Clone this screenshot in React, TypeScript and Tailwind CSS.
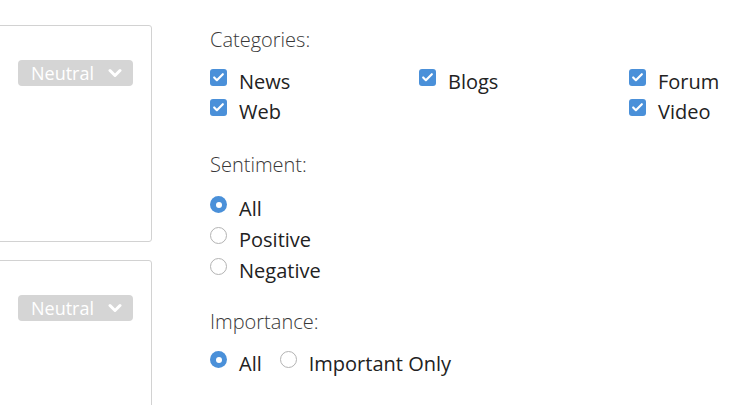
import { Check } from 'lucide-react'

function Badge() {
	return (
		<div className="ml-[27px] flex h-[26px] w-[115px] items-center rounded-[4px] bg-[#d5d5d5] pl-[13px] text-[18px] text-white">
			<span className="leading-[26px]">Neutral</span>
			<svg width="14" height="10" viewBox="0 0 14 10" className="ml-[14px]">
				<path d="M2 2.5l5 5 5-5" fill="none" stroke="white" strokeWidth="3" strokeLinecap="round" strokeLinejoin="round" />
			</svg>
		</div>
	)
}

function Card({ className }: { className: string }) {
	return (
		<div className={`-ml-[10px] w-[162px] shrink-0 rounded-[3px] border border-[#d2d2d2] pt-[34px] ${className}`}>
			<Badge />
		</div>
	)
}

function CheckItem({ label }: { label: string }) {
	return (
		<div className="flex h-[30px] items-start">
			<span className="mt-[3px] flex size-[17px] items-center justify-center rounded-[3px] bg-[#4a90d9]">
				<Check className="size-[13px] text-white" strokeWidth={4} />
			</span>
			<span className="ml-[12px] text-[20px] leading-[31px] text-[#222]">{label}</span>
		</div>
	)
}

function RadioItem({ label, checked }: { label: string; checked?: boolean }) {
	return (
		<div className="flex h-[31px] items-start">
			{checked ? (
				<span className="mt-[3px] flex size-[17px] items-center justify-center rounded-full bg-[#4a90d9]">
					<span className="size-[6px] rounded-full bg-white" />
				</span>
			) : (
				<span className="mt-[3px] size-[17px] rounded-full border border-[#b3b3b3] bg-white" />
			)}
			<span className="ml-[12px] text-[20px] leading-[31px] text-[#222]">{label}</span>
		</div>
	)
}

export default function App() {
	return (
		<div className="flex h-[405px] w-[750px] overflow-hidden bg-white font-['Open_Sans',sans-serif]">
			<div className="flex w-[152px] shrink-0 flex-col gap-[18px] pt-[25px]">
				<Card className="h-[217px]" />
				<Card className="h-[200px]" />
			</div>
			<div className="ml-[58px] flex flex-col pt-[28px]">
				<p className="text-[20px] font-light leading-[24px] text-[#383838]">Categories:</p>
				<div className="mt-[14px] grid grid-cols-[209px_210px_auto]">
					<CheckItem label="News" />
					<CheckItem label="Blogs" />
					<CheckItem label="Forum" />
					<CheckItem label="Web" />
					<div />
					<CheckItem label="Video" />
				</div>
				<p className="mt-[27px] text-[20px] font-light leading-[24px] text-[#383838]">Sentiment:</p>
				<div className="mt-[16px] flex flex-col">
					<RadioItem label="All" checked />
					<RadioItem label="Positive" />
					<RadioItem label="Negative" />
				</div>
				<p className="mt-[24px] text-[20px] font-light leading-[24px] text-[#383838]">Importance:</p>
				<div className="mt-[14px] flex gap-[18px]">
					<RadioItem label="All" checked />
					<RadioItem label="Important Only" />
				</div>
			</div>
		</div>
	)
}
